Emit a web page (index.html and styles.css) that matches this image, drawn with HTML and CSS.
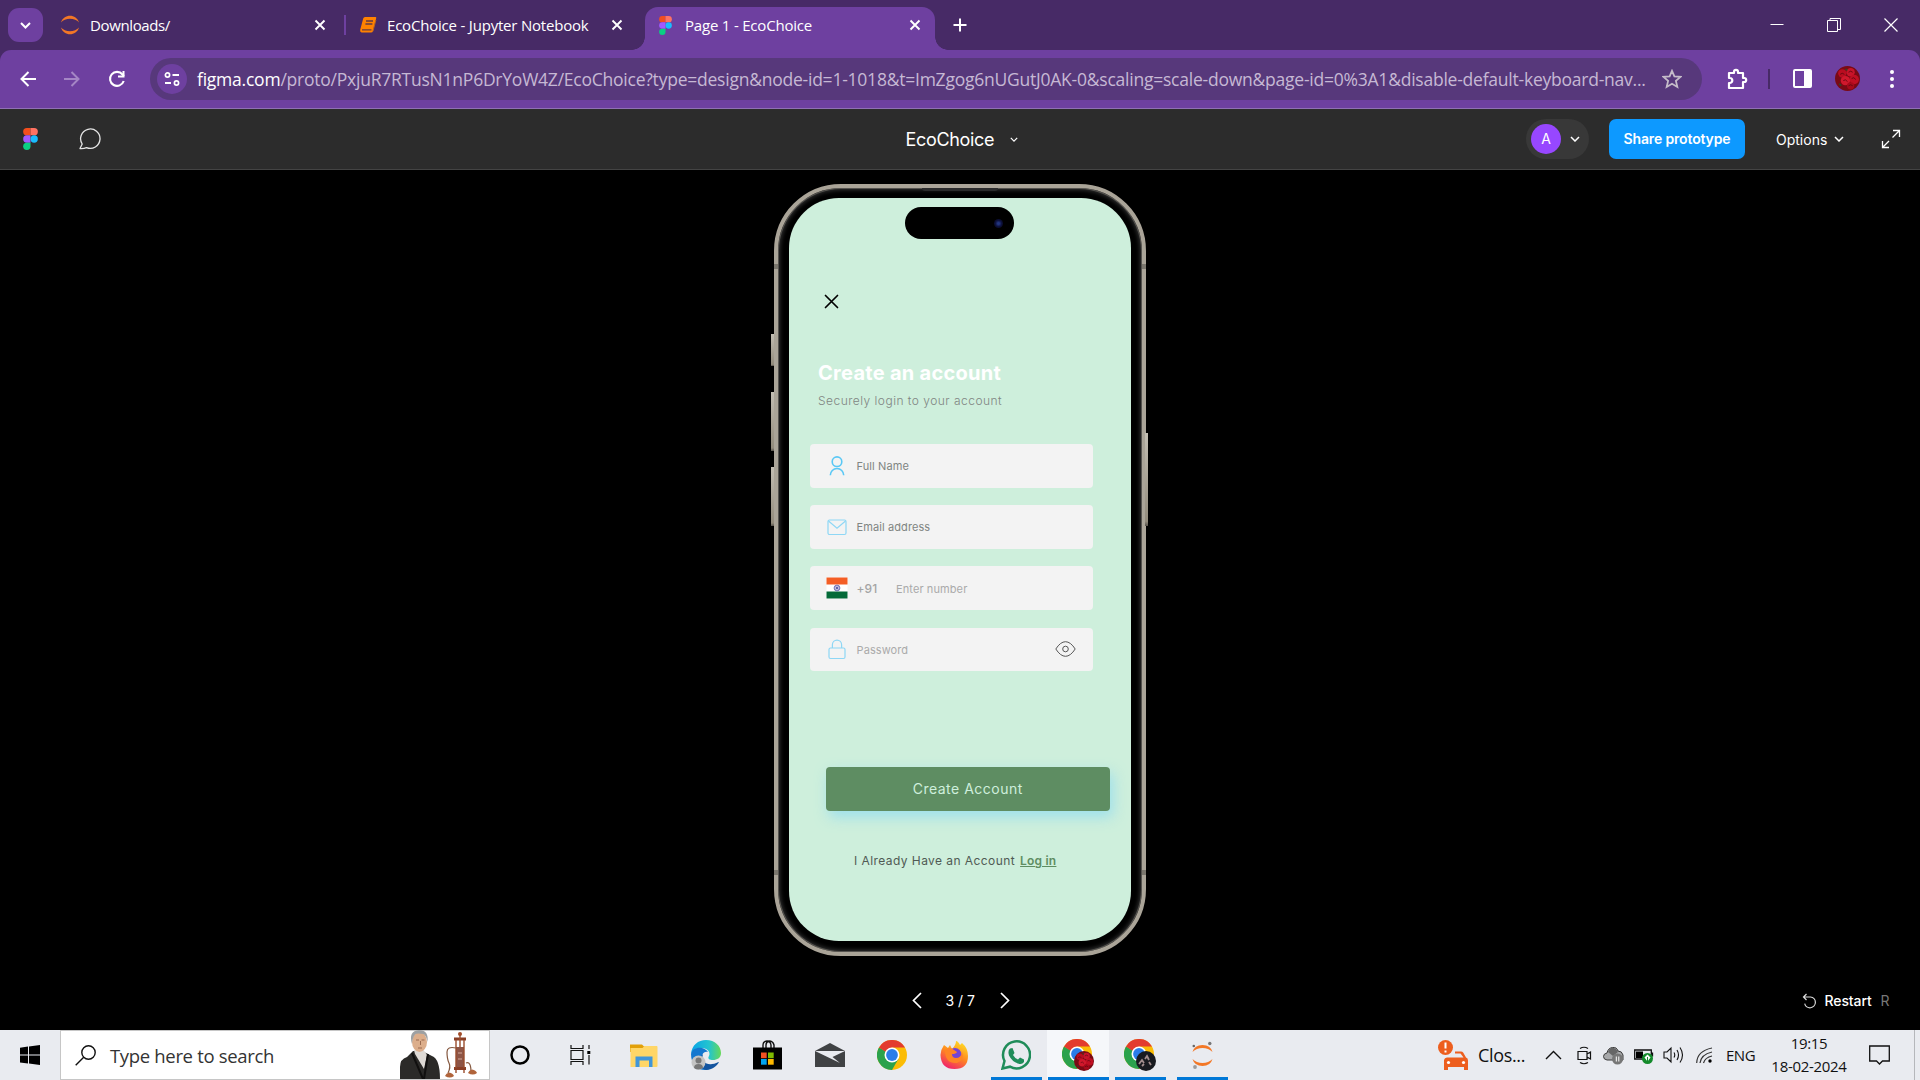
FILE: index.html
```html
<!DOCTYPE html>
<html lang="en">
<head>
    <meta charset="UTF-8">
    <title>Page 1 - EcoChoice</title>
    <link rel="stylesheet" href="styles.css">
</head>
<body>
    <!-- shared shapes -->
    <svg class="defs" width="0" height="0">
        <defs>
            <symbol id="figma" viewBox="0 0 14 21">
                <path d="M3.5 0H7v7H3.5a3.5 3.5 0 0 1 0-7z" fill="#f24e1e"/>
                <path d="M7 0h3.5a3.5 3.5 0 0 1 0 7H7z" fill="#ff7262"/>
                <path d="M3.5 7H7v7H3.5a3.5 3.5 0 0 1 0-7z" fill="#a259ff"/>
                <circle cx="10.5" cy="10.5" r="3.5" fill="#1abcfe"/>
                <path d="M3.5 14H7v3.5A3.5 3.5 0 1 1 3.500 14z" fill="#0acf83"/>
            </symbol>
            <symbol id="close" viewBox="0 0 12 12">
                <path d="M1.500 1.500l9 9m0-9l-9 9" stroke="#fff" stroke-width="1.900" fill="none"/>
            </symbol>
            <symbol id="down" viewBox="0 0 10 6">
                <path d="M1 1l4 4 4-4" stroke="currentColor" stroke-width="1.500" fill="none"/>
            </symbol>
            <symbol id="chrome" viewBox="0 0 30 30">
                <circle cx="15" cy="15" r="15" fill="#fbbc05"/>
                <path d="M15 15L2 7.500A15 15 0 0 0 15 30l6.500-11.200z" fill="#2ba24c"/>
                <path d="M2 7.500A15 15 0 0 1 28 7.500H15L9 12z" fill="#e33b2e"/>
                <circle cx="15" cy="15" r="7.500" fill="#fff"/>
                <circle cx="15" cy="15" r="5.900" fill="#2b7de9"/>
            </symbol>
            <symbol id="roses" viewBox="0 0 24 24">
                <circle cx="12" cy="12" r="12" fill="#7a0a14"/>
                <circle cx="7" cy="7" r="4" fill="#b90d20"/>
                <circle cx="15" cy="6" r="4" fill="#c8142a"/>
                <circle cx="18.500" cy="13" r="4.500" fill="#c00f23"/>
                <circle cx="10" cy="14" r="4.500" fill="#d0182c"/>
                <circle cx="15" cy="19" r="3.500" fill="#a80a1b"/>
                <path d="M5 8q2-2 4 0M8 14q2-2 4 1M16 12q2-2 4 1M13 6q2-2 4 0M13 19q2-2 4 0" stroke="#5a0710" stroke-width=".8" fill="none"/>
                <path d="M4 17l2 2M10 3l2 1" stroke="#2c4a2b" stroke-width="1.200"/>
            </symbol>
        </defs>
    </svg>

    <!-- browser tabs -->
    <div class="tabs">
        <div class="tab-search"><svg width="11" height="7" viewBox="0 0 11 7"><path d="M1 1l4.500 4.500L10 1" stroke="#fff" stroke-width="2" fill="none"/></svg></div>
        <div class="tab">
            <svg width="20" height="20" viewBox="0 0 20 20" fill="#f37726"><path d="M1 7.500C3.500-1.500 16.500-1.500 19 7.500 15 2.600 5 2.600 1 7.500zM1 12.500c2.500 9 15.500 9 18 0-4 4.900-14 4.900-18 0z"/></svg>
            <span class="t1">Downloads/</span>
            <svg class="x" width="12" height="12"><use href="#close"/></svg>
        </div>
        <div class="tab-line"></div>
        <div class="tab second">
            <svg width="18" height="18" viewBox="0 0 18 18"><path d="M6 1h10.500q1 0 .7 1.200L14 15q-.4 1.500-2 1.500H2.500Q.6 16 1.200 13.800L4.200 2.500Q4.600 1 6 1z" fill="#ff8200"/><path d="M7 5h7M6.400 8h7M3 13.800h9.500" stroke="#673b43" stroke-width="1.300"/><path d="M16.900 4l-3 11.300" stroke="#b46225"/></svg>
            <span class="t2">EcoChoice - Jupyter Notebook</span>
            <svg class="x" width="12" height="12"><use href="#close"/></svg>
        </div>
        <div class="tab active">
            <svg width="13" height="19"><use href="#figma"/></svg>
            <span class="t3">Page 1 - EcoChoice</span>
            <svg class="x" width="12" height="12"><use href="#close"/></svg>
        </div>
        <svg class="plus" width="14" height="14" viewBox="0 0 14 14"><path d="M7 .5v13M.5 7h13" stroke="#fff" stroke-width="2"/></svg>
        <div class="win">
            <svg width="14" height="14" viewBox="0 0 14 14"><path d="M.5 6.500h13" stroke="#fff"/></svg>
            <svg width="14" height="14" viewBox="0 0 14 14"><path d="M.5 2.500h10v11H.5zM3 2.500v-2h10.500v11h-3" stroke="#fff" fill="none"/></svg>
            <svg width="14" height="14" viewBox="0 0 14 14"><path d="M.5.5l13 13m0-13l-13 13" stroke="#fff" stroke-width="1.200"/></svg>
        </div>
    </div>

    <!-- address bar -->
    <div class="toolbar-wrap">
        <div class="toolbar">
            <svg width="16" height="16" viewBox="0 0 16 16"><path d="M8.500 1L1.500 8l7 7M1.500 8H16" stroke="#fff" stroke-width="2" fill="none"/></svg>
            <svg width="16" height="16" viewBox="0 0 16 16"><path d="M7.500 1l7 7-7 7M0 8h14.500" stroke="#a586c5" stroke-width="2" fill="none"/></svg>
            <svg width="18" height="18" viewBox="0 0 18 18"><path d="M15.700 11A7 7 0 1 1 14.500 4.500L16 6" stroke="#fff" stroke-width="2.100" fill="none"/><path d="M16.500 1v6.500H10V5.500h4.500V1z" fill="#fff"/></svg>
            <div class="address">
                <span class="site"><svg width="16" height="16" viewBox="0 0 16 16"><path d="M8.500 4H15M1 12h6" stroke="#fff" stroke-width="1.800"/><circle cx="3.500" cy="4" r="2.100" fill="none" stroke="#fff" stroke-width="1.700"/><circle cx="12.500" cy="12" r="2.100" fill="none" stroke="#fff" stroke-width="1.700"/></svg></span>
                <span class="url"><b>figma.com</b>/proto/PxjuR7RTusN1nP6DrYoW4Z/EcoChoice?type=design&amp;node-id=1-1018&amp;t=ImZgog6nUGutJ0AK-0&amp;scaling=scale-down&amp;page-id=0%3A1&amp;disable-default-keyboard-nav...</span>
                <svg class="star" width="20" height="20" viewBox="0 0 20 20"><path d="M10 1.800l2.400 5.600 6.100.5-4.600 4 1.400 6L10 14.700 4.700 17.900l1.400-6-4.600-4 6.100-.5z" stroke="#c5bcc9" stroke-width="1.800" fill="none"/></svg>
            </div>
            <svg class="ext" width="22" height="22" viewBox="0 0 22 22"><path d="M3 5h5V3.800a2 2 0 0 1 4 0V5h5v5h1.200a2 2 0 0 1 0 4H17v6H3v-5h.8a2.500 2.500 0 0 0 0-5H3z" stroke="#fff" stroke-width="2.200" stroke-linejoin="round" fill="none"/></svg>
            <div class="bar-line"></div>
            <svg class="panel" width="19" height="19" viewBox="0 0 19 19"><rect x="1" y="1" width="17" height="17" rx="1" stroke="#fff" stroke-width="2" fill="none"/><path d="M11 1h7v17h-7z" fill="#fff"/></svg>
            <svg class="me" width="25" height="25"><use href="#roses"/></svg>
            <svg class="dots" width="4" height="18" viewBox="0 0 4 18" fill="#fff"><circle cx="2" cy="2" r="2"/><circle cx="2" cy="9" r="2"/><circle cx="2" cy="16" r="2"/></svg>
        </div>
    </div>

    <!-- figma header -->
    <div class="header">
        <div class="left">
            <svg width="15" height="22"><use href="#figma"/></svg>
            <svg width="24" height="22" viewBox="0 0 24 22"><path d="M2 20.500L4.200 16A9.700 9.700 0 1 1 8.500 19.600Q6 20.700 2 20.500z" stroke="#e6e6e6" stroke-width="1.300" stroke-linejoin="round" fill="none"/></svg>
        </div>
        <div class="file"><span>EcoChoice</span><svg width="8" height="5"><use href="#down"/></svg></div>
        <div class="right">
            <div class="user"><i>A</i><svg width="10" height="6"><use href="#down"/></svg></div>
            <div class="share"><span>Share prototype</span></div>
            <div class="options"><span>Options</span><svg width="10" height="6"><use href="#down"/></svg></div>
            <svg width="20" height="20" viewBox="0 0 20 20"><path d="M12 1.500h6.500V8M18 2l-6.500 6.500M1.500 12v6.500H8M2 18l6-6" stroke="#fff" stroke-width="1.300" fill="none"/></svg>
        </div>
    </div>

    <!-- prototype -->
    <div class="stage">
        <div class="phone">
            <span class="key k1"></span><span class="key k2"></span><span class="key k3"></span><span class="key k4"></span>
            <span class="seam s1"></span><span class="seam s2"></span><span class="seam s3"></span><span class="seam s4"></span>
            <span class="speaker"></span>
            <div class="screen">
                <div class="island"><i></i></div>
                <svg class="exit" width="15" height="15" viewBox="0 0 15 15"><path d="M1.500 1.500l12 12m0-12l-12 12" stroke="#000" stroke-width="1.700" stroke-linecap="round"/></svg>
                <h1><span>Create an account</span></h1>
                <p class="sub"><span>Securely login to your account</span></p>
                <div class="form">
                    <div class="field">
                        <svg width="22" height="22" viewBox="0 0 22 22"><g stroke="#5ac8f5" stroke-width="1.600" fill="none"><circle cx="11" cy="6.700" r="4.800"/><path d="M4.300 20.200a6.700 6.700 0 0 1 13.400 0"/></g></svg>
                        <span class="f1">Full Name</span>
                    </div>
                    <div class="field">
                        <svg width="22" height="22" viewBox="0 0 22 22"><g stroke="#8ed7f5" stroke-width="1.200" fill="none"><rect x="2" y="4" width="18" height="14.500" rx="1.500"/><path d="M2.500 5l8.500 7.200L19.500 5"/></g></svg>
                        <span class="f2">Email address</span>
                    </div>
                    <div class="field">
                        <svg width="22" height="22" viewBox="0 0 22 22"><path d="M.5.500h21v21H.5z" fill="#fff"/><path d="M.5.500h21v7H.5z" fill="#f45e25"/><path d="M.5 14.500h21v7H.5z" fill="#046a38"/><circle cx="11" cy="11" r="2.900" stroke="#5553a4" stroke-width=".8" fill="none"/><path d="M8.500 11h5M11 8.500v5M9.300 9.300l3.400 3.400m0-3.400l-3.400 3.400" stroke="#4d4aa0" stroke-width=".7"/></svg>
                        <span class="code">+91</span>
                        <span class="f3">Enter number</span>
                    </div>
                    <div class="field">
                        <svg width="22" height="22" viewBox="0 0 22 22"><g stroke="#8ed7f5" stroke-width="1.200" fill="none"><rect x="3" y="10" width="16" height="10.500" rx="1.500"/><path d="M6.400 10V6.700a4.600 4.600 0 0 1 9.200 0V10"/></g></svg>
                        <span class="f4">Password</span>
                        <svg class="eye" width="21" height="16" viewBox="0 0 21 16"><path d="M.8 8Q5.500.7 10.500.7T20.200 8q-4.700 7.300-9.700 7.300T.8 8z" stroke="#555" fill="none"/><circle cx="10.500" cy="8" r="2.800" stroke="#555" fill="none"/></svg>
                    </div>
                </div>
                <div class="create"><span>Create Account</span></div>
                <p class="login"><span>I Already Have an Account</span><a>Log in</a></p>
            </div>
        </div>
        <div class="pager">
            <svg width="10" height="17" viewBox="0 0 10 17"><path d="M9 1L1.500 8.500 9 16" stroke="#fff" stroke-width="1.700" fill="none"/></svg>
            <span>3 / 7</span>
            <svg width="10" height="17" viewBox="0 0 10 17"><path d="M1 1l7.500 7.500L1 16" stroke="#fff" stroke-width="1.700" fill="none"/></svg>
        </div>
        <div class="restart">
            <svg width="15" height="16" viewBox="0 0 15 16"><path d="M4.500 1L1.500 4l3 3M1.500 4H8.500a5.400 5.400 0 1 1-5.800 6.500" stroke="#ddd" stroke-width="1.200" fill="none"/></svg>
            <span>Restart</span><em>R</em>
        </div>
    </div>

    <!-- windows taskbar -->
    <div class="taskbar">
        <div class="start"><svg width="20" height="20" viewBox="0 0 20 20"><path d="M0 2.800l8-1.200v8H0zM9 1.500L20 0v9.600H9zM0 10.600h8v8l-8-1.200zM9 10.600h11V20L9 18.500z"/></svg></div>
        <div class="search">
            <svg width="21" height="21" viewBox="0 0 21 21"><circle cx="13.500" cy="7.500" r="6.700" stroke="#111" stroke-width="1.400" fill="none"/><path d="M8.700 12.300L.7 20.300" stroke="#111" stroke-width="1.400"/></svg>
            <span>Type here to search</span>
            <svg class="art" width="80" height="49" viewBox="0 0 80 49">
                <path d="M1 49V37q0-8 7-10l6-6h9l10 5q8 3 8 23z" fill="#2b2a28"/>
                <path d="M15 20l9-1 4 6-3 14-9-15z" fill="#dedad5"/>
                <path d="M13 23l11 26M29 24l-4 25" stroke="#11100f" stroke-width="2" fill="none"/>
                <ellipse cx="20.500" cy="12" rx="7.500" ry="10" fill="#dcae8b"/>
                <path d="M13 14Q9 1 20 0q10 0 8.500 12-1-6-4-8-6-1-8 0-3 3-3.500 10z" fill="#9ea1a3"/>
                <path d="M17 10h3M22.500 10h3M21.500 11v4M19 18h4" stroke="#9a6b50" fill="none"/>
                <path d="M55 7.500h12v3H55zM55 37h12v3H55z" fill="#8a3e25"/>
                <path d="M57 17h8v20h-8z" fill="#8d5546"/>
                <path d="M59 23h4M59 29h4" stroke="#d6ab9a"/>
                <path d="M61 3v14M57 10v28M65 10v28M57 40v3M65 40v3" stroke="#9b4d2d" stroke-width="1.400"/>
                <circle cx="61" cy="4" r="2" fill="#a14b28"/>
                <path d="M57 18q-9-2-9 4 0 7 2 11t-1 10M67 33q5-2 5 9" stroke="#84573e" stroke-width="1.200" fill="none"/>
                <path d="M46 46q1-3 4-3.500 4 .5 5 3.500-4 3-9 0zM69 43q1-3 4-3.500 4 .5 5 3.500-4 3-9 0z" fill="#b0643b"/>
            </svg>
        </div>
        <div class="apps">
            <div class="app"><svg width="20" height="20" viewBox="0 0 20 20"><circle cx="10" cy="10" r="8.500" stroke="#000" stroke-width="2.500" fill="none"/></svg></div>
            <div class="app view"><svg width="21" height="20" viewBox="0 0 21 20"><path d="M1 0v3.500h12V0M1 5.500h12v9H1zM1 20v-3.500h12V20M19 0v4M19 10v9.500" stroke="#111" stroke-width="1.200" fill="none"/><path d="M17.300 6h3v3h-3z"/></svg></div>
            <div class="app"><svg width="28" height="25" viewBox="0 0 28 25"><path d="M0 1.500h12l2 2H27V9H0z" fill="#e2a008"/><path d="M.5 5h12l2-2h12q1 0 1 1v19q0 1-1 1H.5z" fill="#ffd667"/><path d="M5.500 13.500h17V24H19v-6.500H9.500V24h-4z" fill="#4196d9"/></svg></div>
            <div class="app"><svg width="30" height="30" viewBox="0 0 30 30">
                <defs><linearGradient id="eg"><stop offset="0" stop-color="#0aa3e8"/><stop offset=".6" stop-color="#23c4cf"/><stop offset="1" stop-color="#67d958"/></linearGradient></defs>
                <path d="M0 14C1 5 7 0 15 0c9 0 15 6 15 13 0 5-4 7-8 7-3 0-6-1-4-4 2-4-2-8-7-8C5 8 1 11 0 14z" fill="url(#eg)"/>
                <path d="M0 14C1 9 6 7 11 8c3 1 5 2 6 4-5-1-7 3-5 8 2 4 6 7 10 7-3 2-5 3-8 3C6 30 0 24 0 14z" fill="#1477cf"/>
                <path d="M12 14c-3 8 4 11 9 10 3 0 6-2 7-2-2 4-7 8-13 8-6-1-9-10-3-16z" fill="#13549f"/>
                <circle cx="7.500" cy="22.500" r="7" fill="#c4c4c4"/><circle cx="7.500" cy="20.500" r="3" fill="#777"/><path d="M3 28q0-4 4.500-4T12 28q-5 3-9 0z" fill="#777"/></svg></div>
            <div class="app store"><svg width="29" height="30" viewBox="0 0 29 30"><path d="M10 8V5q0-3.500 4-4 3.500.2 4 4v3M13 8V5q0-3 3-4 4 0 5 4v3" stroke="#111" stroke-width="1.400" fill="none"/><path d="M0 7.500h29V29q0 .5-.5.500H.5Q0 29.500 0 29z"/><path d="M8 12.500h5.700v5.700H8z" fill="#f25022"/><path d="M15 12.500h5.700v5.700H15z" fill="#7fba00"/><path d="M8 19h5.700v5.700H8z" fill="#00a4ef"/><path d="M15 19h5.700v5.700H15z" fill="#ffb900"/></svg></div>
            <div class="app"><svg width="30" height="24" viewBox="0 0 30 24"><path d="M0 8L15 0l15 8v16H0z" fill="#404244"/><path d="M0 8h30l-12.500 6L25 20 0 8z" fill="#e9ebf0"/></svg></div>
            <div class="app"><svg width="30" height="30"><use href="#chrome"/></svg></div>
            <div class="app"><svg width="29" height="30" viewBox="0 0 29 30">
                <defs><linearGradient id="ff" x1=".8" y1="0" x2=".3" y2="1"><stop offset="0" stop-color="#ffe226"/><stop offset=".5" stop-color="#ff8a1f"/><stop offset="1" stop-color="#f0206d"/></linearGradient></defs>
                <path d="M4 5l4 3 2-3 2 4q4-4 4-8 2 0 4 4l2-2q6 5 6 13 0 13-13.500 13T.5 15Q1 9 4 5z" fill="url(#ff)"/>
                <circle cx="15" cy="14.500" r="6.500" fill="#7543d5"/><path d="M5 10q5-4 9 0l3 2q-1 2-5 2 0 4 4 4 5 0 6-6 3 8-5 11Q5 24 5 10z" fill="#ff8426"/></svg></div>
            <div class="app run"><svg width="30" height="30" viewBox="0 0 30 30"><path d="M1.500 28.500L3.500 21A13.500 13.500 0 1 1 9 26.700z" stroke="#1f8c59" stroke-width="2.500" fill="none"/><path d="M9 8.500l2.500-.5 2 5-1.500 2q2 3.500 5 4.500l2-2 4 2v2.500q-2 3-6 1.500-6-2-9-8-1.500-5 1-7z" fill="#1f8c59"/></svg></div>
            <div class="app run current"><svg width="32" height="32" viewBox="0 0 32 32"><use href="#chrome" width="30" height="30"/><use href="#roses" x="12" y="12" width="20" height="20"/></svg></div>
            <div class="app run"><svg width="32" height="32" viewBox="0 0 32 32"><use href="#chrome" width="30" height="30"/><circle cx="22" cy="22" r="10" fill="#181a1f"/><path d="M15 25l3-4 2 3M21 20l2-3 2 4M25 23l2 3M18 27l2-2" stroke="#a18c8c" stroke-width="1.800" fill="none"/></svg></div>
            <div class="app run"><svg width="21" height="28" viewBox="0 0 21 28"><path d="M.5 11q2-7 10-7t10 7Q16.500 7 10.500 7T.5 11zM.5 18q2 7 10 7t10-7q-4 4-10 4T.5 18z" fill="#f37726"/><circle cx="1.800" cy="5" r="1.300" fill="#666"/><circle cx="17.800" cy="2.500" r="1.700" fill="#777"/><circle cx="3" cy="26" r="1.900" fill="#9b9b9b"/></svg></div>
        </div>
        <div class="tray">
            <svg class="car" width="30" height="30" viewBox="0 0 30 30"><g fill="#ed5e1e"><circle cx="7.500" cy="7.500" r="7.500"/><path d="M6 20q.5-2.500 3-2.500h16.500l-3-4H17V11.500h6q1.500 0 2.300 1.300L28 17.500q2 .5 2 3V30h-4v-3H10v3H6z"/></g><path d="M7.500 2.500v6M7.500 10.500v2" stroke="#fff" stroke-width="2"/><circle cx="10.500" cy="22.500" r="1.600" fill="#fff"/><circle cx="25.500" cy="22.500" r="1.600" fill="#fff"/></svg>
            <span class="clos">Clos...</span>
            <svg class="up" width="17" height="10" viewBox="0 0 17 10"><path d="M1 9l7.500-7.500L16 9" stroke="#111" stroke-width="1.400" fill="none"/></svg>
            <svg class="cam" width="15" height="19" viewBox="0 0 15 19"><path d="M1 5.500h9v8H1zM10 8l3.500-2v7L10 11M3 2.500Q7 0 11 2.500M3 16.500q4 2.500 8 0" stroke="#111" stroke-width="1.200" fill="none"/></svg>
            <svg class="cloud" width="21" height="19" viewBox="0 0 21 19"><path d="M4 14q-3.500-.5-3.500-3.500T4 7q1-5 5.500-5.500T15 5q4 0 5 4v5z" fill="#a7a8aa" stroke="#3a3a3a"/><path d="M5 6q2-5 6-4 3 1 4 4l-5 4z" fill="#666"/><circle cx="14.500" cy="13" r="5.500" fill="#777"/><path d="M13.300 10.500v5M15.800 10.500v5" stroke="#fff"/></svg>
            <svg class="battery" width="20" height="19" viewBox="0 0 20 19"><path d="M.7 4h16.600v9H.7zM18.500 6.500v4" stroke="#111" stroke-width="1.300" fill="none"/><path d="M2 5.500h7v6.500H2z"/><circle cx="13.500" cy="12.500" r="5.500" fill="#138a2b"/><path d="M13.500 8.500l3 3-3 4-3-4z" fill="#fff"/><path d="M13.500 11v5" stroke="#138a2b"/></svg>
            <svg class="sound" width="21" height="18" viewBox="0 0 21 18"><path d="M1 6h3l4-4v14l-4-4H1zM11 6.500q1.500 2.500 0 5M14 4q3 5 0 10M17 1.500q5 7.500 0 15" stroke="#111" stroke-width="1.100" fill="none"/></svg>
            <svg class="wifi" width="17" height="17" viewBox="0 0 17 17"><path d="M.7 16Q1 4 16 1M4 16Q5 7.500 16 5M7.500 16Q9 10.500 16 9" stroke="#333" stroke-width="1.200" fill="none"/><circle cx="14" cy="14" r="1.700"/></svg>
            <span class="lang">ENG</span>
            <div class="clock"><span class="time">19:15</span><span class="date">18-02-2024</span></div>
            <svg class="note" width="21" height="21" viewBox="0 0 21 21"><path d="M.7 1h19.600v15H13.500l-3 3-3-3H.7z" stroke="#111" stroke-width="1.300" fill="none"/></svg>
            <div class="desk"></div>
        </div>
    </div>
</body>
</html>
```

FILE: styles.css
```css
* { box-sizing: border-box; }
body { margin: 0; width: 1920px; height: 1080px; overflow: hidden; background: #000; font-family: "Open Sans", "Noto Sans", sans-serif; }
svg { display: block; flex: none; }
.defs { position: absolute; }
span { white-space: nowrap; }

/* tabs */
.tabs { display: flex; align-items: center; height: 50px; background: #472a66; color: #fff; font-size: 15px; }
.tab-search { display: flex; align-items: center; justify-content: center; width: 35px; height: 34px; margin: 0 7px 0 8px; border-radius: 11px; background: #6e40a0; }
.tab { display: flex; align-items: center; width: 294px; height: 50px; padding: 0 18px 0 10px; }
.tab span { flex: 1; width: 0; margin-left: 10px; letter-spacing: -.2px; }
.tab .t1 { letter-spacing: -.37px; }
.tab-line { width: 2px; height: 20px; background: #6e40a0; }
.tab.second { width: 299px; padding: 0 22px 0 13px; }
.tab.active { position: relative; width: 290px; height: 43px; margin-top: 7px; padding: 0 14px 7px; border-radius: 13px 13px 0 0; background: #6e40a0; }
.tab.active span { margin-left: 13px; }
.tab.active::before, .tab.active::after { content: ""; position: absolute; bottom: 0; width: 13px; height: 13px; }
.tab.active::before { left: -13px; background: radial-gradient(circle at 0 0, transparent 12.5px, #6e40a0 13px); }
.tab.active::after { right: -13px; background: radial-gradient(circle at 100% 0, transparent 12.5px, #6e40a0 13px); }
.plus { margin-left: 18px; }
.win { display: flex; gap: 43px; margin-left: auto; margin-right: 22px; }

/* address bar */
.toolbar-wrap { height: 59px; background: #472a66; }
.toolbar { display: flex; align-items: center; height: 59px; padding: 0 26px 1px 20px; border-radius: 11px 11px 0 0; background: #6e40a0; border-bottom: 1px solid #9070b4; }
.toolbar > svg:nth-child(2) { margin: 0 28px; }
.address { display: flex; align-items: center; flex: none; width: 1552px; height: 42px; margin-left: 24px; padding: 0 20px 0 7px; border-radius: 21px; background: #57387b; font-size: 17.5px; letter-spacing: -.23px; }
.site { display: flex; flex: none; align-items: center; justify-content: center; width: 30px; height: 30px; border-radius: 50%; background: #6e40a0; }
.url { flex: 1; width: 0; margin-left: 10px; color: #c6b8d4; }
.url b { font-weight: normal; color: #fff; }
.ext { margin-left: 24px; }
.bar-line { width: 2px; height: 20px; margin-left: 20px; background: #472a66; }
.panel { margin-left: 23px; }
.me { margin-left: 23px; }
.dots { margin-left: auto; }

/* figma header */
.header { display: grid; grid-template-columns: 1fr 200px 1fr; align-items: center; height: 61px; background: #2c2c2c; border-bottom: 1px solid #444; color: #fff; font-family: Inter, sans-serif; font-size: 14px; }
.left { display: flex; align-items: center; gap: 39.5px; padding-left: 23px; }
.file { display: flex; align-items: center; gap: 16px; padding-left: 45.500px; font-size: 18px; letter-spacing: -.33px; }
.right { display: flex; align-items: center; justify-content: flex-end; padding-right: 19.500px; }
.user { display: flex; align-items: center; gap: 9px; width: 63px; height: 40px; padding-left: 5px; margin-right: 20px; border-radius: 20px; background: #383838; }
.user i { width: 30px; height: 30px; border-radius: 50%; background: #9747ff; font-style: normal; line-height: 30px; text-align: center; }
.share { width: 136px; height: 40px; margin-right: 31px; border-radius: 7px; background: #0d99ff; line-height: 40px; text-align: center; font-weight: 600; letter-spacing: -.15px; }
.options { display: flex; align-items: center; justify-content: space-between; width: 67.500px; margin-right: 37px; }

/* phone */
.stage { position: relative; height: 860px; padding-top: 14px; background: #000; }
.phone { position: relative; width: 372px; height: 772px; margin: 0 auto; padding: 10px 11px 11px; border: 4px solid #aaa498; border-radius: 67px; background: #000; box-shadow: inset 0 0 0 1px #55534f, inset 0 0 4px 2px #333; }
.screen { display: flex; flex-direction: column; width: 342px; height: 743px; border-radius: 50px; background: #ceefdc; overflow: hidden; font-family: Inter, sans-serif; color: #808582; }
.key { position: absolute; width: 3px; background: linear-gradient(#c3beb3, #928b7c 95%, #55514a); }
.k1 { left: -7px; top: 146px; height: 32px; }
.k2 { left: -7px; top: 204px; height: 59px; }
.k3 { left: -7px; top: 279px; height: 59px; }
.k4 { right: -6px; top: 245px; height: 93px; }
.seam { position: absolute; width: 4px; height: 5px; background: #7b776e; }
.s1 { left: -4px; top: 76px; }
.s2 { right: -4px; top: 76px; }
.s3 { left: -4px; bottom: 77px; }
.s4 { right: -4px; bottom: 77px; }
.speaker { position: absolute; left: 144px; top: 0; width: 76px; height: 3px; border-radius: 0 0 4px 4px; background: #2a2a2b; }
.island { display: flex; align-items: center; justify-content: flex-end; flex: none; width: 109px; height: 32px; margin: 9px 0 1px 116px; padding-right: 11px; border-radius: 17px; background: #000; }
.island i { width: 9px; height: 9px; border-radius: 50%; background: radial-gradient(#22357e 15%, #0c103c 50%, #060713); }
.exit { margin: 54px 0 0 35px; }
.screen h1 { height: 28px; margin: 50px 0 0 29px; color: #fff; font-size: 20px; line-height: 28px; font-weight: 700; letter-spacing: .28px; }
.sub { height: 20px; margin: 4px 0 0 29px; font-size: 12px; line-height: 20px; font-weight: 300; letter-spacing: .48px; }
.form { display: flex; flex-direction: column; gap: 17.6px; margin: 33px 0 0 20.5px; }
.field { display: flex; align-items: center; width: 283.500px; height: 43.600px; padding: 0 17.500px 0 16.500px; border-radius: 4px; background: #f3f3f3; font-size: 11px; letter-spacing: .1px; }
.field span { margin-left: 8.500px; }
.field .code { width: 22px; font-size: 12px; font-weight: 500; color: #a4a4a4; }
.field .f3 { margin: 1px 0 0 17.500px; color: #aaa; }
.field .f4 { margin-top: 1px; color: #aaa; }
.eye { margin-left: auto; }
.create { flex: none; width: 283.500px; height: 44px; margin: 96px 0 0 37px; border-radius: 4px; background: #5e8d62; box-shadow: 3px 6px 14px rgba(130, 215, 245, .65); color: #ceefdc; font-size: 14px; line-height: 44px; text-align: center; letter-spacing: .5px; }
.login { display: flex; gap: 5px; height: 20px; margin: 40px 0 0 65px; font-size: 12px; line-height: 20px; color: #505a54; letter-spacing: .43px; }
.login a { color: #5e8d62; font-weight: 600; letter-spacing: .2px; text-decoration: underline; white-space: nowrap; }
.pager { display: flex; align-items: center; gap: 24px; width: 98px; height: 17px; margin: 36px 0 0 911.500px; color: #fff; font-family: Inter, sans-serif; font-size: 14px; }
.pager span { width: 30px; }
.restart { display: flex; align-items: center; height: 17px; margin: -17px 0 0 1802px; color: #fff; font-family: Inter, sans-serif; font-size: 14px; }
.restart span { width: 49px; margin: 0 7px 0 7.500px; font-weight: 500; letter-spacing: -.1px; }
.restart em { font-style: normal; color: #777; }

/* taskbar */
.taskbar { display: flex; height: 50px; background: #e9ebf0; color: #111; }
.start { display: flex; align-items: center; justify-content: center; width: 60px; }
.search { display: flex; align-items: center; width: 430px; border: 1px solid #c6c6c6; background: #fff; color: #333; font-size: 18.500px; letter-spacing: -.33px; }
.search > svg:first-child { margin: 0 14px; }
.art { margin-left: auto; margin-right: 10px; align-self: flex-end; }
.apps { display: flex; margin-left: -1px; }
.app { display: flex; align-items: center; justify-content: center; width: 62px; height: 50px; }
.app.view { padding-right: 4px; }
.app.store { padding-right: 2px; }
.run { background: linear-gradient(#0078d7, #0078d7) center bottom / 51px 3px no-repeat; }
.run.current { background: linear-gradient(#0078d7, #0078d7) center bottom / 61px 3px no-repeat #f5f7fa; }
.tray { display: flex; align-items: center; margin-left: auto; font-size: 16px; }
.car { margin-right: 10px; }
.clos { width: 48px; margin-right: 19px; font-size: 18px; letter-spacing: -.35px; }
.cam { margin-left: 15px; }
.cloud { margin-left: 11px; }
.battery { margin-left: 10px; }
.sound { margin-left: 9px; }
.wifi { margin-left: 12px; }
.lang { width: 29px; margin-left: 13px; font-size: 15px; letter-spacing: -.5px; }
.clock { display: flex; flex-direction: column; align-items: center; width: 76px; margin: 0 22px 0 16px; font-size: 15px; line-height: 23px; letter-spacing: -.3px; }
.desk { width: 6px; height: 50px; margin-left: 24px; border-left: 1px solid #b5b7bb; }
```
